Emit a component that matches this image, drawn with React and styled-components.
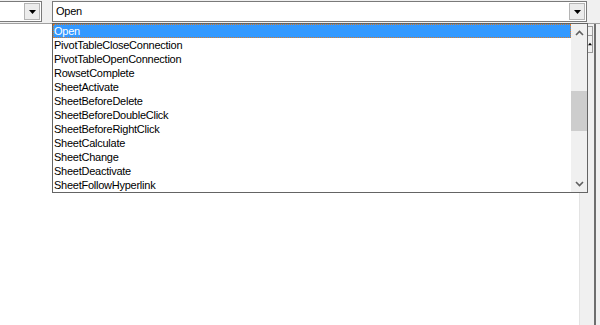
import React from "react";
import styled, { createGlobalStyle } from "styled-components";

const GlobalStyle = createGlobalStyle`
  html, body { margin: 0; padding: 0; background: #ffffff; }
  body { font-family: "Liberation Sans", Arial, sans-serif; }
`;

const Page = styled.div`
  width: 600px;
  height: 325px;
  display: flex;
  flex-direction: column;
  overflow: hidden;
  position: relative;
  font-size: 11px;
  letter-spacing: -0.25px;
  color: #000;
`;

const Toolbar = styled.div`
  height: 24px;
  box-sizing: border-box;
  background: #f0f0f0;
  border-bottom: 1px solid #a0a0a0;
  display: flex;
  align-items: flex-start;
  padding-top: 1px;
  gap: 10px;
  flex: none;
`;

const Combo = styled.div`
  position: relative;
  box-sizing: border-box;
  width: ${(p) => p.$w}px;
  height: 21px;
  background: #fff;
  border: 1px solid #7a7a7a;
  ${(p) => (p.$noLeft ? "border-left: none;" : "")}
  display: flex;
  align-items: center;
  padding-left: 3px;
`;

const ComboText = styled.span`
  flex: 1;
  line-height: 19px;
  white-space: nowrap;
`;

const DropButton = styled.div`
  box-sizing: border-box;
  width: 16px;
  height: 17px;
  margin-right: 1px;
  background: #ececec;
  border: 1px solid #b4b4b4;
  display: flex;
  align-items: center;
  justify-content: center;
`;

const Body = styled.div`
  flex: 1;
  display: flex;
`;

const Editor = styled.div`
  flex: 1;
  background: #fff;
`;

const VScroll = styled.div`
  width: 15px;
  box-sizing: border-box;
  background: #f0f0f0;
  border-left: 1px solid #e3e3e3;
  display: flex;
  flex-direction: column;
  padding-top: 2px;
`;

const SplitBox = styled.div`
  height: 8px;
  border: 1px solid #9a9a9a;
  margin: 0 1px 0 7px;
`;

const ScrollBtn = styled.div`
  height: 16px;
  border: 1px solid #9a9a9a;
  border-top: none;
  margin: 0 1px 0 7px;
  display: flex;
  align-items: center;
  justify-content: center;
`;

const WindowEdge = styled.div`
  width: 2px;
  background: #6e6e6e;
`;

const OuterStrip = styled.div`
  width: 4px;
  background: #f0f0f0;
`;

const DropList = styled.div`
  position: absolute;
  top: calc(100% + 2px);
  left: -1px;
  width: 536px;
  box-sizing: border-box;
  border: 1px solid #646464;
  background: #fff;
  display: flex;
  z-index: 5;
`;

const Items = styled.div`
  flex: 1;
  display: flex;
  flex-direction: column;
`;

const Item = styled.div`
  height: 14px;
  box-sizing: border-box;
  line-height: 12px;
  padding-left: 0;
  white-space: nowrap;
  border: 1px solid transparent;
  ${(p) =>
    p.$selected &&
    `
    background: #3399ff;
    color: #fff;
    border: 1px dotted #d77a2a;
  `}
`;

const ListScroll = styled.div`
  width: 16px;
  background: #f0f0f0;
  display: flex;
  flex-direction: column;
  align-items: stretch;
`;

const Arrow = styled.div`
  height: 17px;
  display: flex;
  align-items: center;
  justify-content: center;
`;

const Track = styled.div`
  flex: 1;
  display: flex;
  flex-direction: column;
  padding-top: 50px;
`;

const Thumb = styled.div`
  height: 40px;
  background: #cdcdcd;
`;

const Triangle = () => (
  <svg width="7" height="4" viewBox="0 0 7 4">
    <path d="M0 0 H7 L3.5 4 Z" fill="#000" />
  </svg>
);

const UpTriangle = () => (
  <svg width="7" height="4" viewBox="0 0 7 4">
    <path d="M0 4 H7 L3.5 0 Z" fill="#000" />
  </svg>
);

const Chevron = ({ up }) => (
  <svg width="9" height="6" viewBox="0 0 9 6">
    <path
      d={up ? "M1 5 L4.5 1.5 L8 5" : "M1 1 L4.5 4.5 L8 1"}
      fill="none"
      stroke="#606060"
      strokeWidth="1.6"
    />
  </svg>
);

const events = [
  "Open",
  "PivotTableCloseConnection",
  "PivotTableOpenConnection",
  "RowsetComplete",
  "SheetActivate",
  "SheetBeforeDelete",
  "SheetBeforeDoubleClick",
  "SheetBeforeRightClick",
  "SheetCalculate",
  "SheetChange",
  "SheetDeactivate",
  "SheetFollowHyperlink",
];

export default function App() {
  return (
    <>
      <GlobalStyle />
      <Page>
        <Toolbar>
          <Combo $w={42} $noLeft>
            <ComboText />
            <DropButton>
              <Triangle />
            </DropButton>
          </Combo>
          <Combo $w={535}>
            <ComboText>Open</ComboText>
            <DropButton>
              <Triangle />
            </DropButton>
            <DropList>
              <Items>
                {events.map((e, i) => (
                  <Item key={e} $selected={i === 0}>
                    {e}
                  </Item>
                ))}
              </Items>
              <ListScroll>
                <Arrow>
                  <Chevron up />
                </Arrow>
                <Track>
                  <Thumb />
                </Track>
                <Arrow>
                  <Chevron />
                </Arrow>
              </ListScroll>
            </DropList>
          </Combo>
        </Toolbar>
        <Body>
          <Editor />
          <VScroll>
            <SplitBox />
            <ScrollBtn>
              <UpTriangle />
            </ScrollBtn>
          </VScroll>
          <WindowEdge />
          <OuterStrip />
        </Body>
      </Page>
    </>
  );
}
